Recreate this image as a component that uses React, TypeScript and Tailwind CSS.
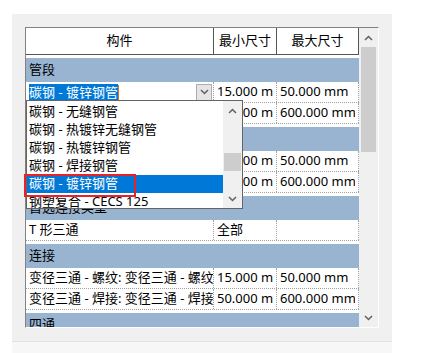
const font = "font-['Noto_Sans','Noto_Sans_CJK_SC',sans-serif]";

const Chevron = ({ up }: { up?: boolean }) => (
  <svg width="9" height="6" viewBox="0 0 9 6" className="block">
    <path
      d={up ? "M1 5L4.5 1.5L8 5" : "M1 1L4.5 4.5L8 1"}
      fill="none"
      stroke="#606060"
      strokeWidth="1.5"
    />
  </svg>
);

const Section = ({ label }: { label: string }) => (
  <div className="h-[27px] shrink-0 bg-white pt-[3px]">
    <div className="flex h-[24px] items-center bg-[#99b4d1] pl-[3px]">{label}</div>
  </div>
);

const cell =
  "flex shrink-0 items-center whitespace-nowrap border-r border-dotted border-[#a0a0a0] pl-[3px]";

const Row = ({ a, b, c }: { a: React.ReactNode; b: string; c: string }) => (
  <div className="flex h-[21px] shrink-0 border-b border-dotted border-[#a0a0a0] bg-white">
    <div className={`${cell} w-[188px] overflow-hidden`}>{a}</div>
    <div className={`${cell} w-[63px] pr-[3px]`}>
      <span className="block overflow-hidden">{b}</span>
    </div>
    <div className={`${cell} w-[82px] pr-[3px]`}>
      <span className="block overflow-hidden">{c}</span>
    </div>
  </div>
);

const Combo = () => (
  <div className="-ml-[3px] flex h-[18px] w-[187px] items-center bg-white pl-[3px]">
    <span className="bg-[#0078d7] leading-[16px] text-white">碳钢 - 镀锌钢管</span>
    <span className="h-[15px] w-px bg-[#e07020]" />
    <div className="ml-auto mr-[1px] flex h-[17px] w-[16px] items-center justify-center border border-[#adadad] bg-[#e5e5e5]">
      <Chevron />
    </div>
  </div>
);

const options = [
  "碳钢 - 无缝钢管",
  "碳钢 - 热镀锌无缝钢管",
  "碳钢 - 热镀锌钢管",
  "碳钢 - 焊接钢管",
  "碳钢 - 镀锌钢管",
  "钢塑复合 - CECS 125",
];

export default function App() {
  return (
    <div className={`h-[353px] w-[424px] bg-white pl-[12px] pt-[14px] text-[13px] text-black ${font}`}>
      <div className="relative h-[327px] w-[380px] bg-[#f0f0f0] pl-[13px] pt-[13px]">
        <div className="flex h-[301px] w-[354px] border border-[#828282] border-b-white border-r-white">
          {/* grid */}
          <div className="flex w-[333px] flex-col overflow-hidden">
            <div className="flex h-[27px] shrink-0 bg-white">
              <div className="flex w-[188px] items-center justify-center border-b border-r border-[#555]">构件</div>
              <div className="flex w-[63px] items-center justify-center border-b border-r border-[#555]">最小尺寸</div>
              <div className="flex w-[82px] items-center justify-center border-b border-r border-[#555]">最大尺寸</div>
            </div>
            <Section label="管段" />
            <Row a={<Combo />} b="15.000 mm" c="50.000 mm" />
            <Row a="碳钢 - 焊接钢管" b="50.000 mm" c="600.000 mm" />
            <Section label="弯头" />
            <Row a="弯头 - 螺纹: 标准" b="15.000 mm" c="50.000 mm" />
            <Row a="弯头 - 焊接: 标准" b="50.000 mm" c="600.000 mm" />
            <Section label="首选连接类型" />
            <Row a="T 形三通" b="全部" c="" />
            <Section label="连接" />
            <Row a="变径三通 - 螺纹: 变径三通 - 螺纹" b="15.000 mm" c="50.000 mm" />
            <Row a="变径三通 - 焊接: 变径三通 - 焊接" b="50.000 mm" c="600.000 mm" />
            <Section label="四通" />
          </div>
          {/* scrollbar */}
          <div className="flex w-[19px] flex-col bg-[#f0f0f0]">
            <div className="flex h-[19px] items-center justify-center">
              <Chevron up />
            </div>
            <div className="mx-[2px] h-[105px] bg-[#cdcdcd]" />
            <div className="flex-1" />
            <div className="flex h-[19px] items-center justify-center">
              <Chevron />
            </div>
          </div>
        </div>

        {/* open dropdown list */}
        <div className="absolute left-[14px] top-[86px] flex h-[109px] w-[217px] border border-[#646464] bg-white">
          <div className="w-[196px] overflow-hidden pt-[2px]">
            {options.map((o, i) => (
              <div
                key={o}
                className={`flex h-[18px] items-center whitespace-nowrap pl-[2px] ${
                  i === 4 ? "bg-[#0078d7] text-white" : ""
                }`}
              >
                {o}
              </div>
            ))}
          </div>
          <div className="flex w-[19px] flex-col bg-[#f0f0f0]">
            <div className="flex h-[19px] items-center justify-center">
              <Chevron up />
            </div>
            <div className="h-[33px]" />
            <div className="mx-[1px] h-[18px] bg-[#cdcdcd]" />
            <div className="flex-1" />
            <div className="flex h-[19px] items-center justify-center">
              <Chevron />
            </div>
          </div>
        </div>

        {/* red highlight */}
        <div className="absolute left-[12px] top-[160px] h-[23px] w-[112px] border-2 border-[#e8222a]" />
      </div>
      <div className="h-[12px] w-[380px] border-t border-[#e3e3e3] bg-[#f7f7f7]" />
    </div>
  );
}
